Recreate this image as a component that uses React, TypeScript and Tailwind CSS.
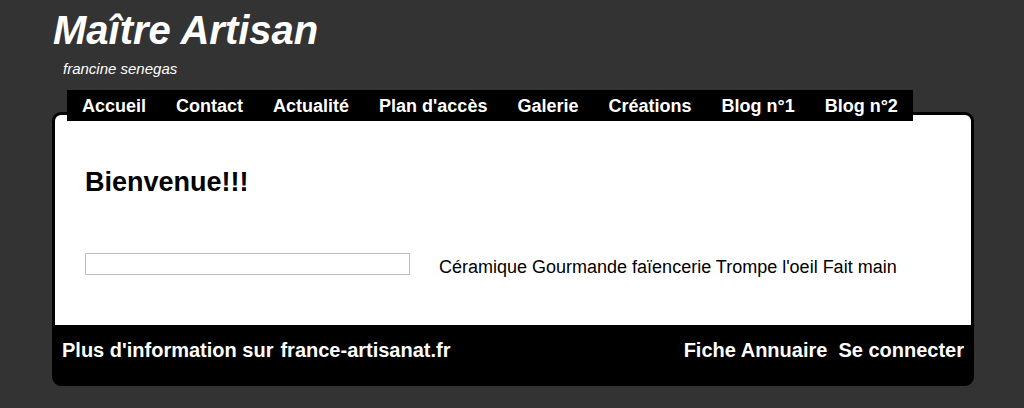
export default function App() {
  const nav = [
    "Accueil",
    "Contact",
    "Actualité",
    "Plan d'accès",
    "Galerie",
    "Créations",
    "Blog n°1",
    "Blog n°2",
  ];

  return (
    <div className="h-[408px] w-[1024px] overflow-hidden bg-[#333333] font-['Liberation_Sans',Arial,sans-serif]">
      {/* Header */}
      <div className="pl-[53px] pt-[6px]">
        <h1 className="text-[40px] font-bold italic leading-[48px] text-white">Maître Artisan</h1>
        <p className="ml-[10px] mt-[6px] text-[15px] italic leading-[18px] text-white">francine senegas</p>
      </div>

      {/* Main panel */}
      <div className="relative mx-[52px] mt-[34px] w-[922px]">
        <nav className="absolute left-[15px] top-[-22px] z-10 flex h-[31px] items-start bg-black">
          {nav.map((item) => (
            <a key={item} className="px-[15px] pt-[2px] text-[18px] font-bold leading-[29px] text-white">
              {item}
            </a>
          ))}
        </nav>

        <div className="overflow-hidden rounded-[9px] border-[3px] border-black bg-black">
          <div className="h-[210px] bg-white px-[30px] pt-[52px]">
            <h2 className="text-[27px] font-bold leading-[30px] text-black">Bienvenue!!!</h2>
            <div className="mt-[56px] flex items-start">
              <div className="h-[22px] w-[325px] border border-[#bdbdbd] bg-white" />
              <p className="ml-[29px] mt-[3px] text-[18px] leading-[22px] text-black">
                Céramique Gourmande faïencerie Trompe l'oeil Fait main
              </p>
            </div>
          </div>
          <div className="flex h-[58px] items-start justify-between pl-[7px] pr-[7px] pt-[12px] text-[20px] font-bold leading-[26px] text-white">
            <div className="flex gap-[7px]">
              <span>Plus d'information sur</span>
              <span>france-artisanat.fr</span>
            </div>
            <div className="flex gap-[11px]">
              <span>Fiche Annuaire</span>
              <span>Se connecter</span>
            </div>
          </div>
        </div>
      </div>
    </div>
  );
}
